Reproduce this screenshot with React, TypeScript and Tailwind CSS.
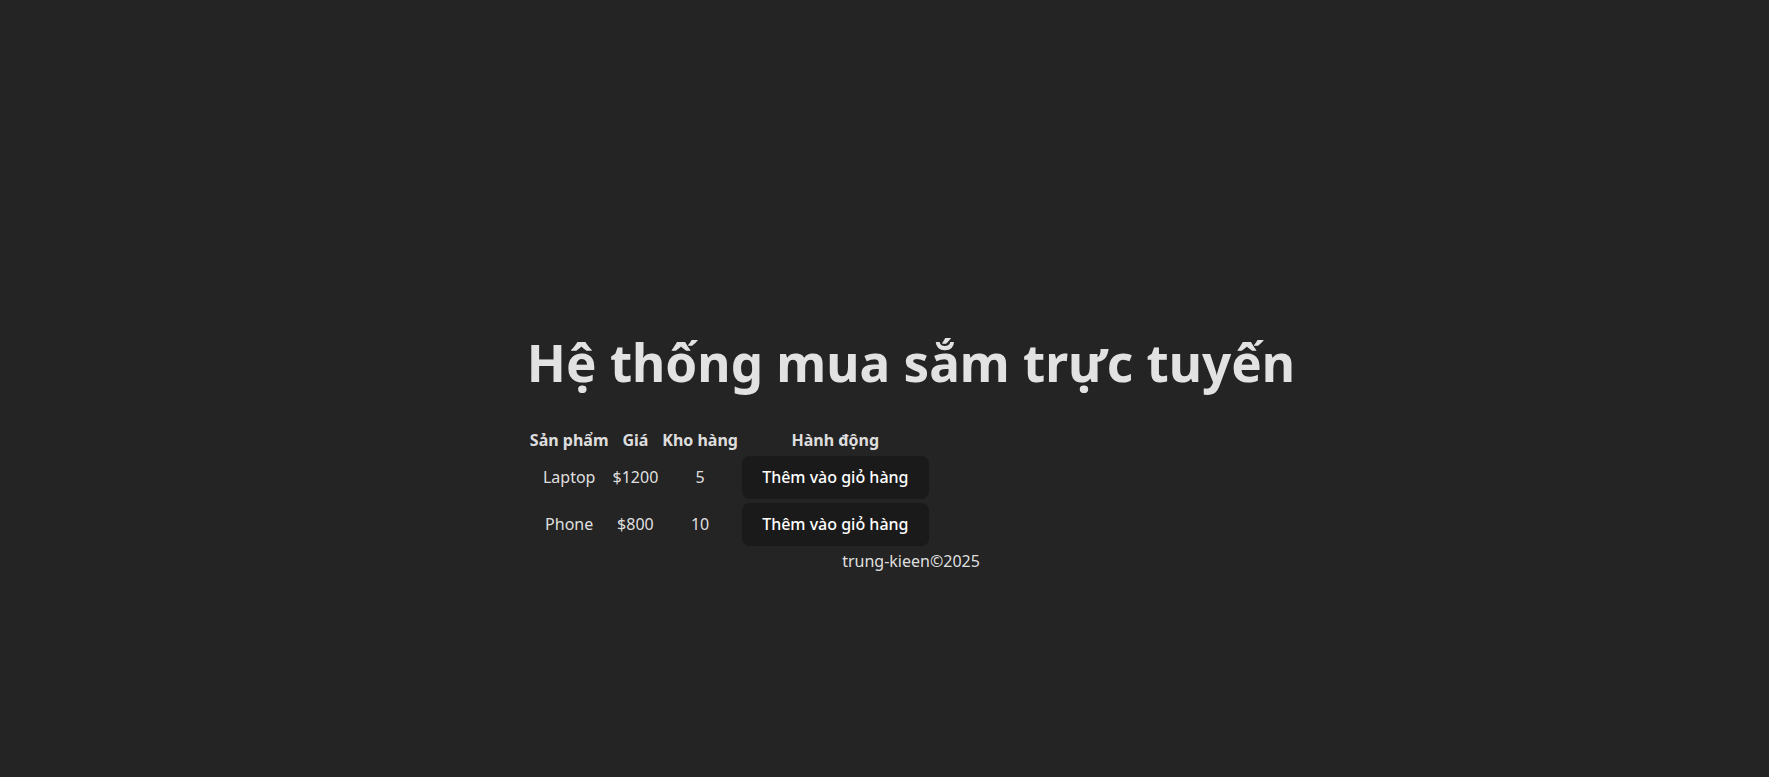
import React from 'react';

interface Product {
  name: string;
  price: number;
  stock: number;
}

const products: Product[] = [
  { name: 'Laptop', price: 1200, stock: 5 },
  { name: 'Phone', price: 800, stock: 10 },
];

export default function App() {
  return (
    <div
      className="min-h-screen bg-[#242424] text-[rgba(255,255,255,0.87)] flex justify-center pl-[53px] pt-[334px]"
      style={{ fontFamily: '"Noto Sans", "Liberation Sans", sans-serif' }}
    >
      <div className="w-fit text-base leading-6">
        <h1 className="text-[51.2px] leading-[1.1] font-bold mb-[34.3px]">Hệ thống mua sắm trực tuyến</h1>

        {/* Product table */}
        <table className="border-separate border-spacing-[2px]">
          <thead>
            <tr>
              <th className="p-[1px] font-bold">Sản phẩm</th>
              <th className="p-[1px] font-bold">Giá</th>
              <th className="p-[1px] font-bold">Kho hàng</th>
              <th className="p-[1px] font-bold">Hành động</th>
            </tr>
          </thead>
          <tbody>
            {products.map((p) => (
              <tr key={p.name}>
                <td className="p-[1px] text-center">{p.name}</td>
                <td className="p-[1px] text-center">${p.price}</td>
                <td className="p-[1px] text-center">{p.stock}</td>
                <td className="p-[1px]">
                  <button className="h-[43px] px-[19.2px] rounded-lg border border-transparent bg-[#1a1a1a] text-white font-medium">
                    Thêm vào giỏ hàng
                  </button>
                </td>
              </tr>
            ))}
          </tbody>
        </table>

        <div className="text-center">trung-kieen©2025</div>
      </div>
    </div>
  );
}
